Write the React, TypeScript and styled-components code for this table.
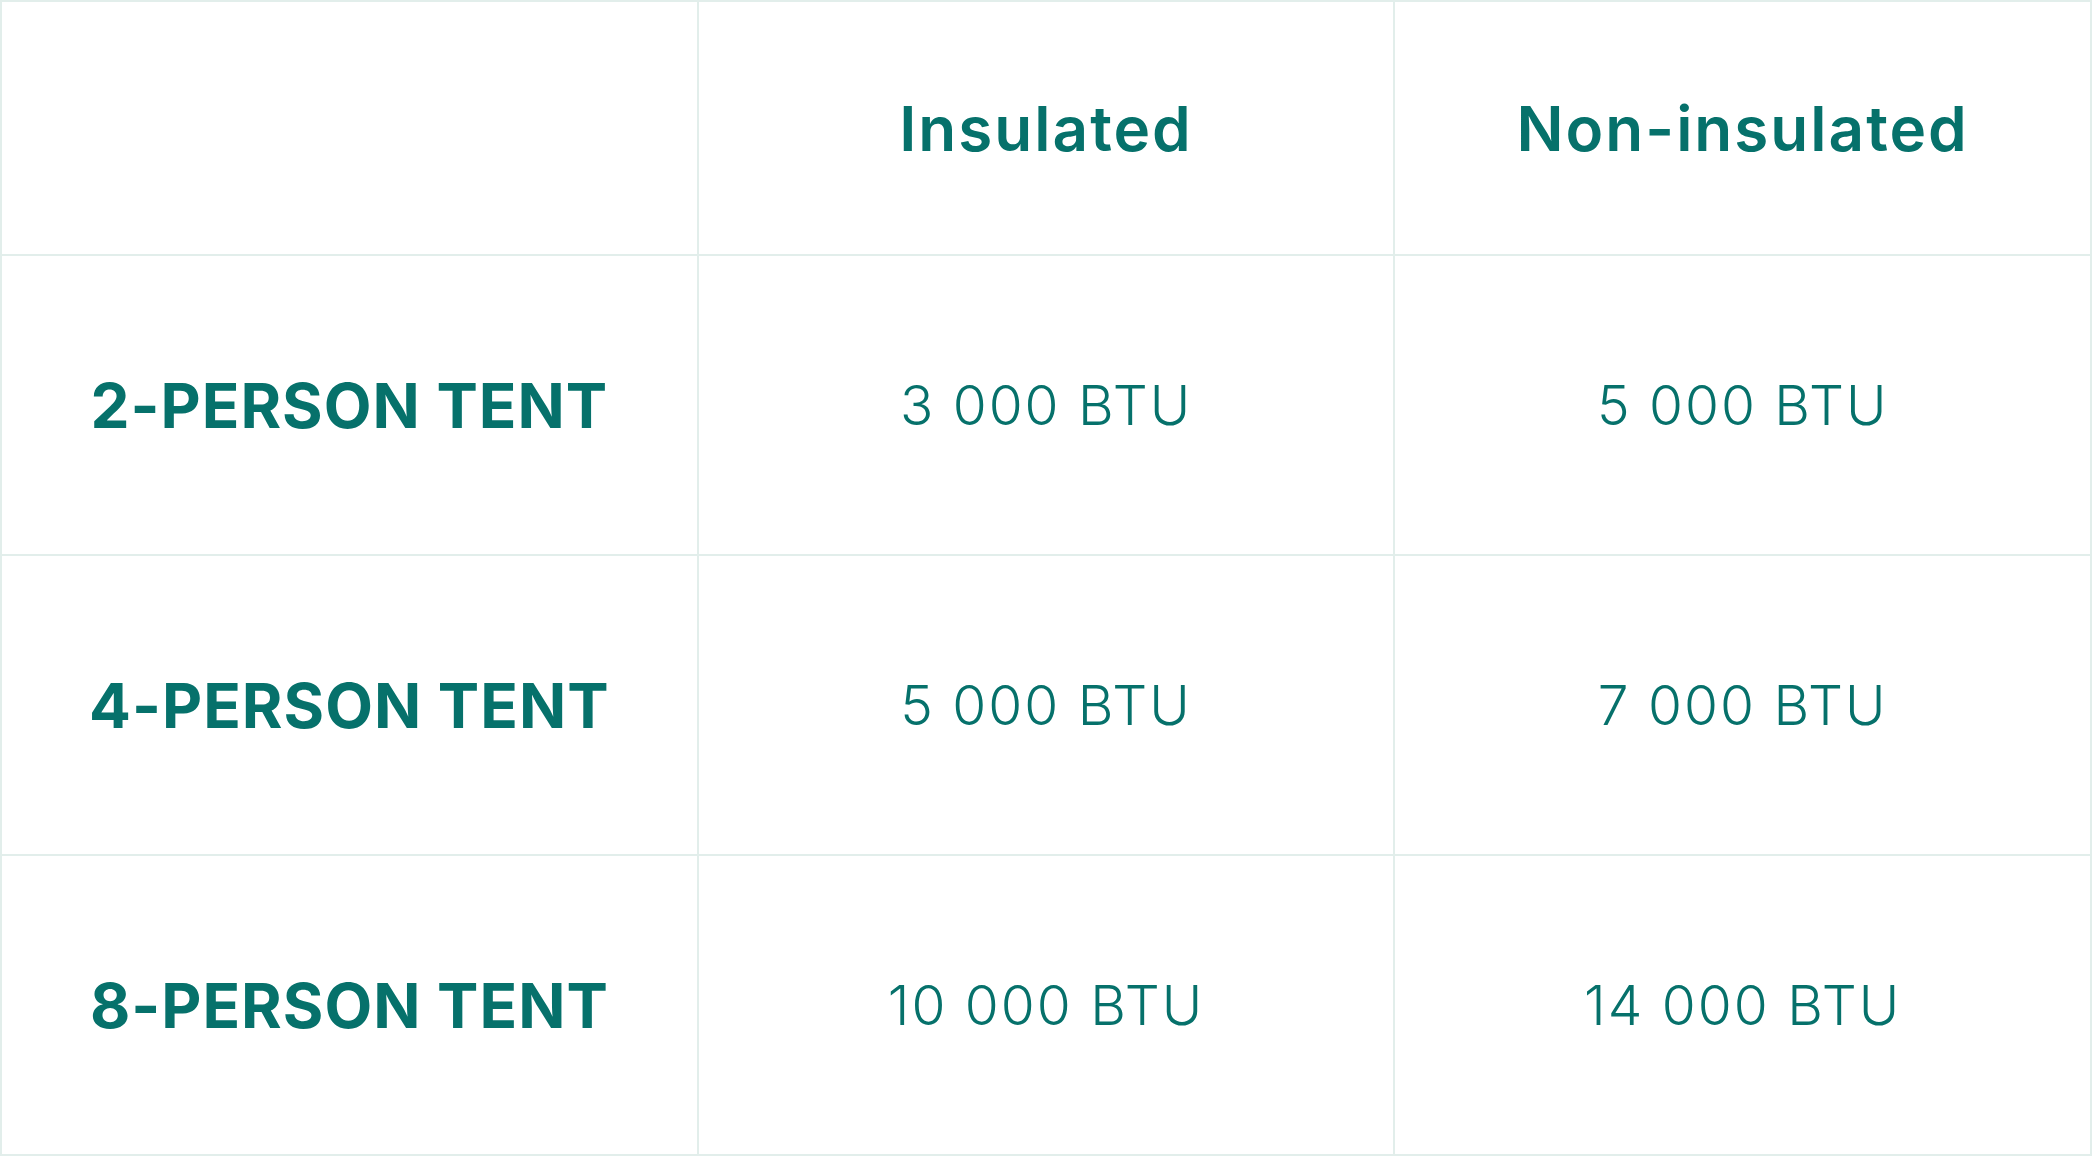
import React from 'react';
import styled, { createGlobalStyle } from 'styled-components';

const GlobalStyle = createGlobalStyle`
  html, body {
    margin: 0;
    padding: 0;
    background: #ffffff;
  }
  body {
    font-family: Inter, 'Noto Sans', sans-serif;
  }
`;

const Table = styled.div`
  display: grid;
  grid-template-columns: repeat(3, 1fr);
  grid-template-rows: 252px repeat(3, 1fr);
  gap: 2px;
  padding: 2px;
  width: 2092px;
  height: 1156px;
  box-sizing: border-box;
  background: #e2eeeb;
`;

const Cell = styled.div`
  display: flex;
  align-items: center;
  justify-content: center;
  background: #ffffff;
  color: #06716b;
`;

const HeadCell = styled(Cell)`
  font-size: 62px;
  font-weight: 600;
  letter-spacing: 2px;
`;

const RowLabel = styled(Cell)`
  font-size: 62px;
  font-weight: 700;
  text-transform: uppercase;
  letter-spacing: 1px;
`;

const Value = styled(Cell)`
  font-size: 55px;
  font-weight: 300;
  letter-spacing: 2px;
`;

const rows = [
  { label: '2-person tent', insulated: '3 000 BTU', nonInsulated: '5 000 BTU' },
  { label: '4-person tent', insulated: '5 000 BTU', nonInsulated: '7 000 BTU' },
  { label: '8-person tent', insulated: '10 000 BTU', nonInsulated: '14 000 BTU' },
];

const App: React.FC = () => {
  return (
    <>
      <GlobalStyle />
      <Table>
        <HeadCell />
        <HeadCell>Insulated</HeadCell>
        <HeadCell>Non-insulated</HeadCell>
        {rows.map((row) => (
          <React.Fragment key={row.label}>
            <RowLabel>{row.label}</RowLabel>
            <Value>{row.insulated}</Value>
            <Value>{row.nonInsulated}</Value>
          </React.Fragment>
        ))}
      </Table>
    </>
  );
};

export default App;
